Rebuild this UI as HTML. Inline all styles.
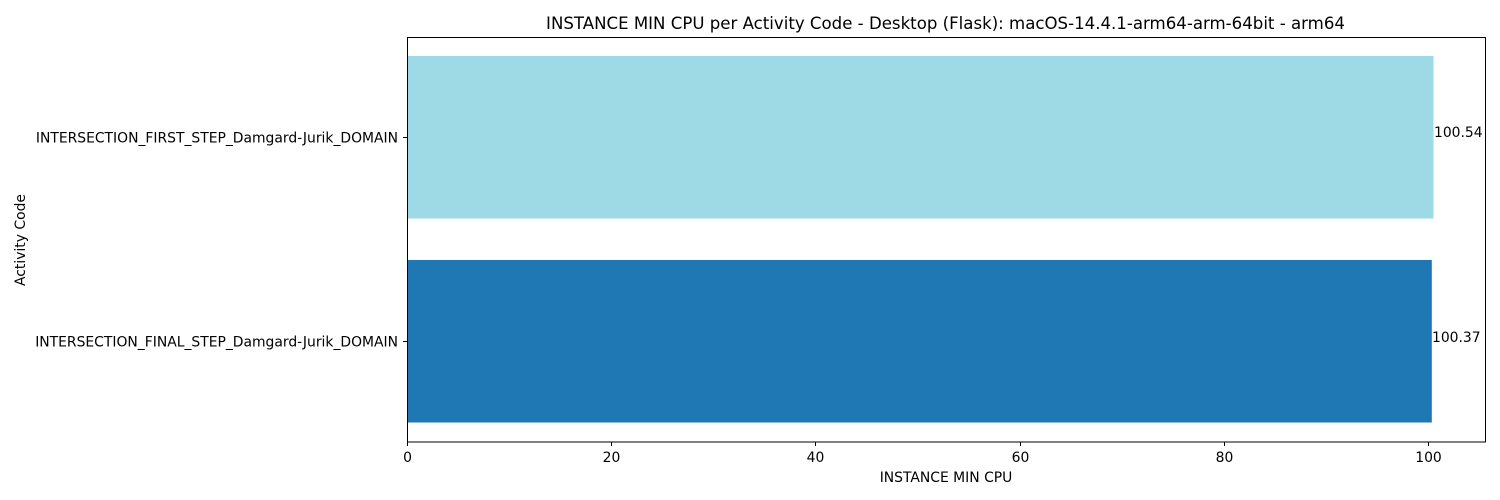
<!DOCTYPE html>
<html><head><style>body{margin:0;background:#fff}svg{display:block}text{font-family:"DejaVu Sans",sans-serif;fill:#000}</style></head>
<body>
<svg width="1500" height="500" viewBox="0 0 1500 500">
<rect width="1500" height="500" fill="#fff"/>
<text x="945.5" y="29" font-size="16.6" text-anchor="middle">INSTANCE MIN CPU per Activity Code - Desktop (Flask): macOS-14.4.1-arm64-arm-64bit - arm64</text>
<rect x="407" y="56" width="1026.5" height="162.5" fill="#9edae5"/>
<rect x="407" y="260" width="1024.8" height="162.5" fill="#1f77b4"/>
<rect x="407.5" y="37.5" width="1078" height="404.5" fill="none" stroke="#000" stroke-width="1"/>
<g stroke="#000" stroke-width="1">
<line x1="407.5" y1="442" x2="407.5" y2="446"/>
<line x1="611.5" y1="442" x2="611.5" y2="446"/>
<line x1="815.5" y1="442" x2="815.5" y2="446"/>
<line x1="1020.5" y1="442" x2="1020.5" y2="446"/>
<line x1="1224.5" y1="442" x2="1224.5" y2="446"/>
<line x1="1428.5" y1="442" x2="1428.5" y2="446"/>
<line x1="403" y1="137.5" x2="407" y2="137.5"/>
<line x1="403" y1="341.5" x2="407" y2="341.5"/>
</g>
<g font-size="13.9" text-anchor="middle">
<text x="407.5" y="462">0</text>
<text x="611.5" y="462">20</text>
<text x="815.5" y="462">40</text>
<text x="1020.5" y="462">60</text>
<text x="1224.5" y="462">80</text>
<text x="1428.5" y="462">100</text>
<text x="946" y="482">INSTANCE MIN CPU</text>
</g>
<g font-size="13.9" text-anchor="end">
<text x="398" y="142.5">INTERSECTION_FIRST_STEP_Damgard-Jurik_DOMAIN</text>
<text x="398" y="346.5">INTERSECTION_FINAL_STEP_Damgard-Jurik_DOMAIN</text>
</g>
<text x="1434" y="137" font-size="13.9">100.54</text>
<text x="1432" y="342" font-size="13.9">100.37</text>
<text transform="translate(25,240) rotate(-90)" font-size="13.9" text-anchor="middle">Activity Code</text>
</svg>
</body></html>
